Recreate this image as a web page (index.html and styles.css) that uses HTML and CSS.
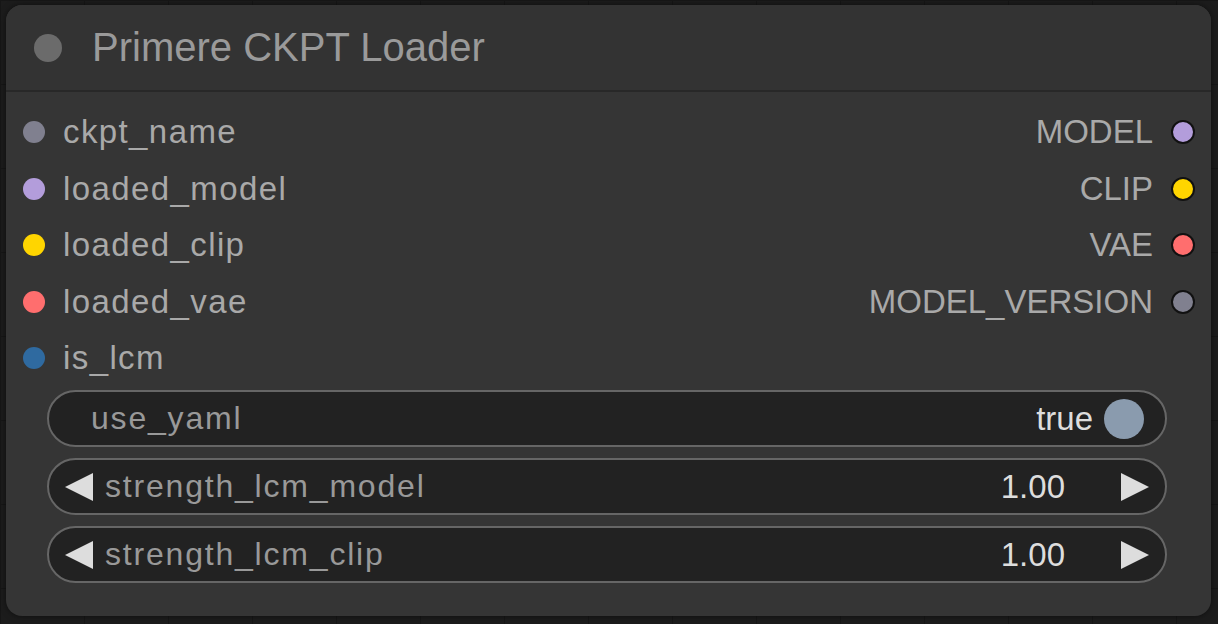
FILE: index.html
```html
<!DOCTYPE html>
<html>
<head>
<meta charset="utf-8">
<link rel="stylesheet" href="styles.css">
</head>
<body>
<div class="canvas">
  <div class="node">
    <div class="title">
      <span class="title-dot"></span>
      <span class="title-text">Primere CKPT Loader</span>
    </div>
    <div class="slots">
      <div class="row">
        <div class="in"><span class="dot c-gray"></span><span class="lbl">ckpt_name</span></div>
        <div class="out"><span class="olbl">MODEL</span><span class="dot ring c-model"></span></div>
      </div>
      <div class="row">
        <div class="in"><span class="dot c-model"></span><span class="lbl">loaded_model</span></div>
        <div class="out"><span class="olbl">CLIP</span><span class="dot ring c-clip"></span></div>
      </div>
      <div class="row">
        <div class="in"><span class="dot c-clip"></span><span class="lbl">loaded_clip</span></div>
        <div class="out"><span class="olbl">VAE</span><span class="dot ring c-vae"></span></div>
      </div>
      <div class="row">
        <div class="in"><span class="dot c-vae"></span><span class="lbl">loaded_vae</span></div>
        <div class="out"><span class="olbl">MODEL_VERSION</span><span class="dot ring c-gray"></span></div>
      </div>
      <div class="row">
        <div class="in"><span class="dot c-bool"></span><span class="lbl">is_lcm</span></div>
      </div>
    </div>
    <div class="widgets">
      <div class="widget toggle">
        <span class="wlbl">use_yaml</span>
        <span class="wval">true</span>
        <span class="knob"></span>
      </div>
      <div class="widget number">
        <span class="arrow left"></span>
        <span class="wlbl">strength_lcm_model</span>
        <span class="wval">1.00</span>
        <span class="arrow right"></span>
      </div>
      <div class="widget number">
        <span class="arrow left"></span>
        <span class="wlbl">strength_lcm_clip</span>
        <span class="wval">1.00</span>
        <span class="arrow right"></span>
      </div>
    </div>
  </div>
</div>
</body>
</html>
```

FILE: styles.css
```css
html, body {
  margin: 0;
  padding: 0;
  background: #1d1d1d;
  width: 1218px;
  height: 624px;
  overflow: hidden;
  font-family: "Liberation Sans", Arial, sans-serif;
}

.canvas {
  width: 1218px;
  height: 624px;
  padding: 5px 0 0 6px;
  box-sizing: border-box;
  background-color: #1c1c1c;
  background-image:
    linear-gradient(to right, #161616 1px, transparent 1px),
    linear-gradient(to bottom, #161616 1px, transparent 1px);
  background-size: 84px 84px;
}

.node {
  width: 1205px;
  height: 611px;
  background: #353535;
  border-radius: 16px;
  box-shadow: 0 0 6px rgba(0, 0, 0, 0.5);
  display: flex;
  flex-direction: column;
  overflow: hidden;
}

.title {
  height: 85px;
  background: #333333;
  border-bottom: 2px solid #282828;
  display: flex;
  align-items: center;
  padding-left: 28px;
}

.title-dot {
  width: 28px;
  height: 28px;
  border-radius: 50%;
  background: #6b6b6b;
  margin-right: 30px;
}

.title-text {
  font-size: 40px;
  color: #9a9a9a;
}

.slots {
  padding-top: 12px;
  display: flex;
  flex-direction: column;
}

.row {
  height: 56.5px;
  display: flex;
  align-items: center;
  justify-content: space-between;
}

.in {
  display: flex;
  align-items: center;
  padding-left: 17px;
}

.out {
  display: flex;
  align-items: center;
  padding-right: 16px;
}

.dot {
  width: 22px;
  height: 22px;
  border-radius: 50%;
  box-sizing: border-box;
}

.dot.ring {
  border: 2px solid #111;
  width: 24px;
  height: 24px;
}

.c-gray { background: #80808f; }
.c-model { background: #b39ddb; }
.c-clip { background: #ffd500; }
.c-vae { background: #ff6e6e; }
.c-bool { background: #2f6aa0; }

.lbl {
  font-size: 33px;
  letter-spacing: 1.4px;
  color: #a9a9a9;
  margin-left: 18px;
}

.olbl {
  font-size: 33px;
  color: #a9a9a9;
  margin-right: 18px;
}

.widgets {
  margin-top: 3.5px;
  padding: 0 44px 0 41px;
  display: flex;
  flex-direction: column;
  gap: 11px;
}

.widget {
  height: 57px;
  box-sizing: border-box;
  border: 2px solid #666666;
  border-radius: 29px;
  background: #222222;
  display: flex;
  align-items: center;
}

.wlbl {
  font-size: 32px;
  letter-spacing: 1.8px;
  color: #999999;
  flex: 1;
}

.wval {
  font-size: 33px;
  color: #dddddd;
}

.toggle {
  padding: 0 21px 0 42px;
}

.toggle .wval {
  margin-right: 11px;
}

.knob {
  width: 40px;
  height: 40px;
  border-radius: 50%;
  background: #8a9bae;
}

.number {
  padding: 0 16px;
}

.number .wlbl {
  margin-left: 12px;
}

.number .wval {
  margin-right: 56px;
}

.arrow {
  width: 0;
  height: 0;
  border-top: 14px solid transparent;
  border-bottom: 14px solid transparent;
}

.arrow.left {
  border-right: 28px solid #dddddd;
}

.arrow.right {
  border-left: 28px solid #dddddd;
}
```
